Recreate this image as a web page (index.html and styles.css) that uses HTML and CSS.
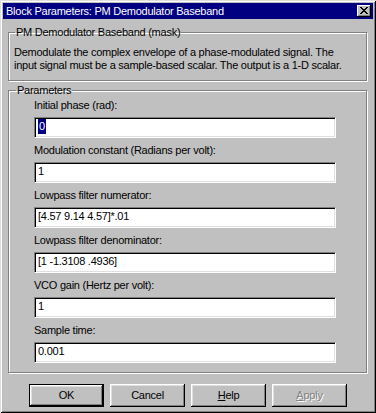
FILE: index.html
```html
<!DOCTYPE html>
<html lang="en">
<head>
    <meta charset="UTF-8">
    <meta name="viewport" content="width=device-width, initial-scale=1.0">
    <title>Block Parameters: PM Demodulator Baseband</title>
    <link rel="stylesheet" href="styles.css">
</head>
<body>
    <div id="wrap">
        <div class="titlebar">
            <span class="title">Block Parameters: PM Demodulator Baseband</span>
            <div class="closebtn">
                <svg width="8" height="7" viewBox="0 0 8 7" shape-rendering="crispEdges">
                    <path d="M0 0h2v1h-2z M6 0h2v1h-2z M1 1h2v1h-2z M5 1h2v1h-2z M2 2h4v1h-4z M3 3h2v1h-2z M2 4h4v1h-4z M1 5h2v1h-2z M5 5h2v1h-2z M0 6h2v1h-2z M6 6h2v1h-2z" fill="#000"/>
                </svg>
            </div>
        </div>

        <fieldset class="group" id="maskGroup">
            <legend>PM Demodulator Baseband (mask)</legend>
            <p class="desc">Demodulate the complex envelope of a phase-modulated signal. The<br>input signal must be a sample-based scalar. The output is a 1-D scalar.</p>
        </fieldset>

        <fieldset class="group" id="paramGroup">
            <legend>Parameters</legend>
            <div class="params">
                <div class="row">
                    <div class="label">Initial phase (rad):</div>
                    <div class="field"><span class="sel">0</span></div>
                </div>
                <div class="row">
                    <div class="label">Modulation constant (Radians per volt):</div>
                    <div class="field">1</div>
                </div>
                <div class="row">
                    <div class="label">Lowpass filter numerator:</div>
                    <div class="field">[4.57 9.14 4.57]*.01</div>
                </div>
                <div class="row">
                    <div class="label">Lowpass filter denominator:</div>
                    <div class="field">[1 -1.3108 .4936]</div>
                </div>
                <div class="row">
                    <div class="label">VCO gain (Hertz per volt):</div>
                    <div class="field">1</div>
                </div>
                <div class="row">
                    <div class="label">Sample time:</div>
                    <div class="field">0.001</div>
                </div>
            </div>
        </fieldset>

        <div class="buttons">
            <div class="btn default">OK</div>
            <div class="btn">Cancel</div>
            <div class="btn"><u>H</u>elp</div>
            <div class="btn disabled"><u>A</u>pply</div>
        </div>
    </div>
</body>
</html>
```

FILE: styles.css
```css
*{margin: 0; padding: 0; box-sizing: border-box;}
body {
    width: 376px;
    height: 413px;
    font-family: "Liberation Sans", Arial, sans-serif;
    font-size: 11px;
    line-height: 13px;
    letter-spacing: -0.25px;
    color: #000;
}
#wrap {
    width: 376px;
    height: 413px;
    background: #c0c0c0;
    padding: 3px;
    display: flex;
    flex-direction: column;
    box-shadow: inset 1px 1px #dfdfdf, inset -1px -1px #000, inset 2px 2px #fff, inset -2px -2px #808080;
}
.titlebar {
    height: 16px;
    background: #000080;
    color: #fff;
    display: flex;
    align-items: center;
    padding-left: 3px;
}
.title {
    line-height: 16px;
}
.closebtn {
    margin-left: auto;
    margin-right: 2px;
    width: 14px;
    height: 12px;
    background: #c0c0c0;
    display: flex;
    align-items: center;
    justify-content: center;
    box-shadow: inset -1px -1px #000, inset 1px 1px #fff, inset -2px -2px #808080;
}
.closebtn svg {
    display: block;
    margin-left: -1px;
    margin-top: -1px;
}

/* group box */
.group {
    border: 1px solid #808080;
    box-shadow: 1px 1px 0 #fff, inset 1px 1px 0 #fff;
    margin: 7px 6px 0 5px;
    padding: 7px 5px 8px 5px;
    min-width: 0;
}
.group legend {
    padding: 0 1px;
    margin-left: 1px;
    line-height: 13px;
}
#paramGroup {
    margin-top: 3px;
    padding-top: 2px;
    padding-bottom: 9px;
}
#paramGroup legend {
    margin-left: 2px;
}
.desc {
    white-space: nowrap;
}
.params {
    padding-left: 20px;
    display: flex;
    flex-direction: column;
    gap: 6px;
}
.label {
    margin-bottom: 5px;
}
.field {
    width: 302px;
    height: 21px;
    background: #fff;
    border: 1px solid;
    border-color: #808080 #fff #fff #808080;
    box-shadow: inset 1px 1px #000, inset -1px -1px #dfdfdf;
    padding: 1px 2px 3px 3px;
    line-height: 15px;
    white-space: nowrap;
}
.sel {
    display: inline-block;
    background: #000080;
    color: #fff;
    padding: 0 1px;
}

/* buttons */
.buttons {
    margin-top: 11px;
    display: flex;
    justify-content: center;
    gap: 6px;
}
.btn {
    width: 75px;
    height: 23px;
    line-height: 23px;
    text-align: center;
    background: #c0c0c0;
    box-shadow: inset -1px -1px #000, inset 1px 1px #fff, inset -2px -2px #808080, inset 2px 2px #dfdfdf;
}
.btn.default {
    border: 1px solid #000;
    line-height: 21px;
}
.btn.disabled {
    color: #808080;
    text-shadow: 1px 1px 0 #fff;
}
```
